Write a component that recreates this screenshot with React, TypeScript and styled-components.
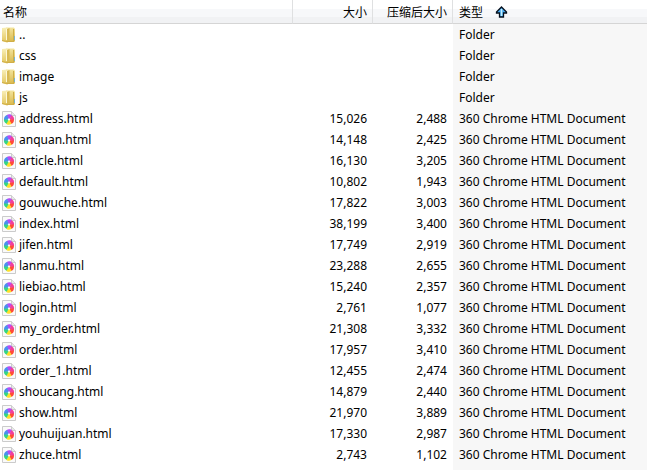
import React from "react";
import styled, { createGlobalStyle } from "styled-components";

const GlobalStyle = createGlobalStyle`
  * { box-sizing: border-box; }
  body {
    margin: 0;
    background: #fff;
    color: #000;
    font-family: "Noto Sans", "Noto Sans CJK SC", sans-serif;
    font-size: 12px;
  }
`;

const Page = styled.main`
  min-height: 100vh;
  background: linear-gradient(to right, #fff 453px, #f7f7f7 453px);
`;

const FileTable = styled.table`
  width: 100%;
  border-collapse: separate;
  border-spacing: 0;
  table-layout: fixed;
`;

const Column = styled.col<{ $width?: number }>`
  width: ${(p) => (p.$width ? `${p.$width}px` : "auto")};
`;

const HeaderCell = styled.th<{ $numeric?: boolean }>`
  height: 24px;
  padding: 0 5px 0 3px;
  border-right: 1px solid #dfe0e1;
  border-bottom: 1px solid #d5d5d5;
  background: linear-gradient(#fff 0 9px, #f7f8fa 9px 17px, #f1f2f4 17px);
  font-family: "Noto Sans CJK SC", sans-serif;
  font-size: 12px;
  font-weight: 400;
  line-height: 22px;
  text-align: ${(p) => (p.$numeric ? "right" : "left")};
  white-space: nowrap;

  &:last-child {
    padding-left: 6px;
    border-right: 0;
  }
`;

const SortButton = styled.button`
  display: flex;
  align-items: center;
  gap: 12px;
  padding: 0;
  border: 0;
  background: none;
  color: inherit;
  font: inherit;
  line-height: 22px;
`;

const Cell = styled.td<{ $numeric?: boolean }>`
  height: 21px;
  padding: 0 6px 0 2px;
  line-height: 21px;
  text-align: ${(p) => (p.$numeric ? "right" : "left")};
  white-space: nowrap;

  &:last-child {
    padding-left: 6px;
  }
`;

const FileName = styled.div`
  display: flex;
  align-items: center;
  gap: 3px;
`;

const Icon = styled.svg`
  display: block;
  flex: none;
`;

function FolderIcon() {
  return (
    <Icon width="14" height="16" viewBox="0 0 14 16" aria-hidden="true">
      <defs>
        <linearGradient id="folder-front" x1="0" y1="0" x2="0" y2="1">
          <stop offset="0" stopColor="#f8efb8" />
          <stop offset="1" stopColor="#e3c65c" />
        </linearGradient>
        <linearGradient id="folder-back" x1="0" y1="0" x2="0" y2="1">
          <stop offset="0" stopColor="#f3e5a0" />
          <stop offset="1" stopColor="#d9b84a" />
        </linearGradient>
      </defs>
      <path d="M4 .5h8l1 1.500V14l-1 1H4z" fill="url(#folder-back)" />
      <path d="M11 2h1v12h-1z" fill="#cfae48" />
      <path d="M12 9h1v4h-1z" fill="#78b4cf" />
      <path d="M0 1 5 .5 7 1.500V14l-2 1.500L0 14z" fill="url(#folder-front)" />
      <path d="M5 2 7.500 1v13L5 15.500z" fill="#d8ba54" />
      <path d="M4.500 2v11" stroke="#fdf8d8" fill="none" />
      <path d="M0 13.500 5 14.500h7" stroke="#d0ae48" fill="none" />
    </Icon>
  );
}

const petals = ["#b44df5", "#f03f9c", "#ff4a38", "#ffe02b", "#35d584", "#4a90ee"];

function HtmlIcon() {
  return (
    <Icon width="14" height="16" viewBox="0 0 14 16" aria-hidden="true">
      <path d="M.5.500h9l4 4v11H.5z" fill="#fafafa" stroke="#cbcbcb" />
      <path d="M9.500.500v4h4" fill="#e8e8e8" stroke="#cbcbcb" />
      {petals.map((color, index) => (
        <path
          key={color}
          d="M7 8.500 4.500 4.200C6.500 2.800 9 3.200 10 4.600z"
          fill={color}
          transform={`rotate(${index * 60} 7 8.500)`}
        />
      ))}
      <circle cx="7" cy="8.500" r="1" fill="#fff" />
    </Icon>
  );
}

function SortArrow() {
  return (
    <Icon width="13" height="12" viewBox="0 0 13 12" aria-hidden="true">
      <path
        d="M6.500 1 11.500 6v1H8.500v4h-4V7h-3V6z"
        fill="#45a8ee"
        stroke="#06101d"
        strokeWidth="1.300"
      />
      <path d="M6.500 3v7" stroke="#c5f0ff" strokeWidth="1.500" />
    </Icon>
  );
}

interface Entry {
  name: string;
  size?: string;
  packed?: string;
}

const entries: Entry[] = [
  { name: ".." },
  { name: "css" },
  { name: "image" },
  { name: "js" },
  { name: "address.html", size: "15,026", packed: "2,488" },
  { name: "anquan.html", size: "14,148", packed: "2,425" },
  { name: "article.html", size: "16,130", packed: "3,205" },
  { name: "default.html", size: "10,802", packed: "1,943" },
  { name: "gouwuche.html", size: "17,822", packed: "3,003" },
  { name: "index.html", size: "38,199", packed: "3,400" },
  { name: "jifen.html", size: "17,749", packed: "2,919" },
  { name: "lanmu.html", size: "23,288", packed: "2,655" },
  { name: "liebiao.html", size: "15,240", packed: "2,357" },
  { name: "login.html", size: "2,761", packed: "1,077" },
  { name: "my_order.html", size: "21,308", packed: "3,332" },
  { name: "order.html", size: "17,957", packed: "3,410" },
  { name: "order_1.html", size: "12,455", packed: "2,474" },
  { name: "shoucang.html", size: "14,879", packed: "2,440" },
  { name: "show.html", size: "21,970", packed: "3,889" },
  { name: "youhuijuan.html", size: "17,330", packed: "2,987" },
  { name: "zhuce.html", size: "2,743", packed: "1,102" },
];

export default function App() {
  return (
    <Page>
      <GlobalStyle />
      <FileTable>
        <colgroup>
          <Column $width={293} />
          <Column $width={80} />
          <Column $width={80} />
          <Column />
        </colgroup>
        <thead>
          <tr>
            <HeaderCell scope="col">名称</HeaderCell>
            <HeaderCell scope="col" $numeric>大小</HeaderCell>
            <HeaderCell scope="col" $numeric>压缩后大小</HeaderCell>
            <HeaderCell scope="col" aria-sort="ascending">
              <SortButton type="button">
                类型
                <SortArrow />
              </SortButton>
            </HeaderCell>
          </tr>
        </thead>
        <tbody>
          {entries.map((entry) => (
            <tr key={entry.name}>
              <Cell>
                <FileName>
                  {entry.size ? <HtmlIcon /> : <FolderIcon />}
                  {entry.name}
                </FileName>
              </Cell>
              <Cell $numeric>{entry.size}</Cell>
              <Cell $numeric>{entry.packed}</Cell>
              <Cell>{entry.size ? "360 Chrome HTML Document" : "Folder"}</Cell>
            </tr>
          ))}
        </tbody>
      </FileTable>
    </Page>
  );
}
